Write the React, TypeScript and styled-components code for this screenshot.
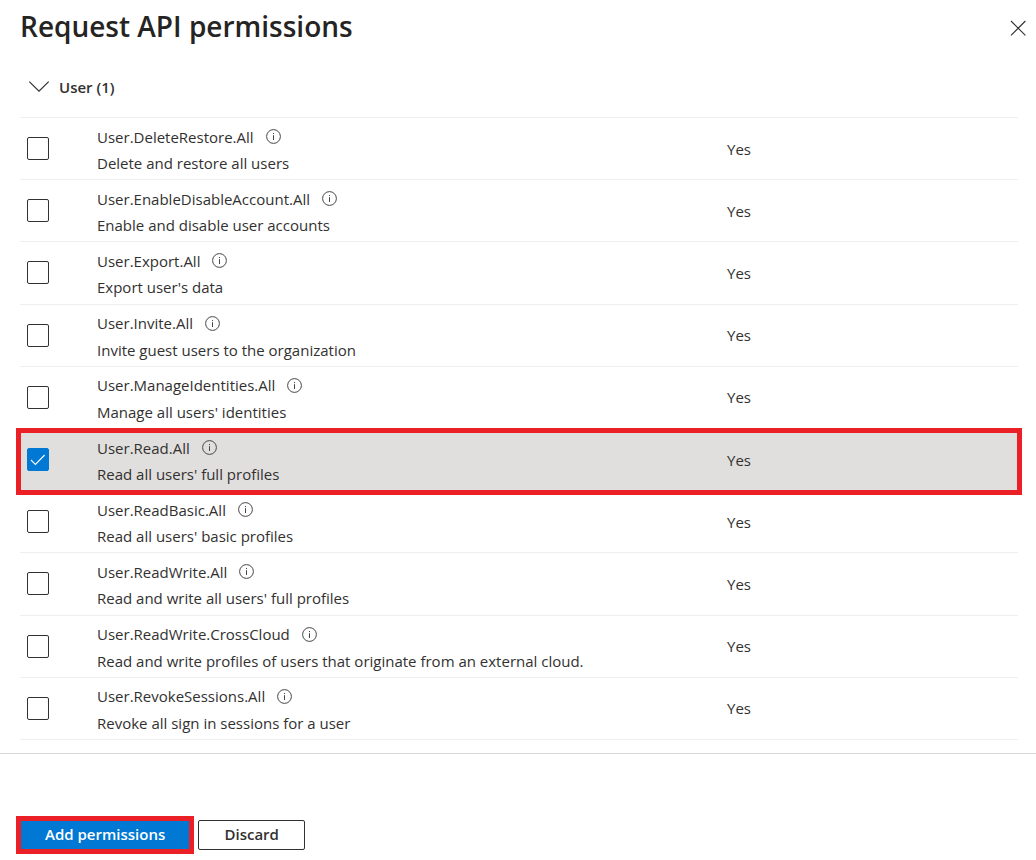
import React, { useState } from "react";
import styled, { createGlobalStyle } from "styled-components";

const GlobalStyle = createGlobalStyle`
  * { box-sizing: border-box; }
  body {
    margin: 0;
    background: #fff;
    color: #323130;
    font-family: "Open Sans", "Noto Sans", sans-serif;
    font-size: 15px;
    line-height: 20px;
  }
  button { font: inherit; color: inherit; cursor: pointer; }
`;

const Panel = styled.main`
  display: flex;
  flex-direction: column;
`;

const Header = styled.header`
  display: flex;
  align-items: center;
  justify-content: space-between;
  height: 56px;
  padding: 0 8px 0 20px;
`;

const Title = styled.h1`
  margin: 0;
  padding-bottom: 4px;
  font-size: 28px;
  line-height: 40px;
  font-weight: 600;
  color: #252423;
`;

const IconButton = styled.button`
  display: flex;
  padding: 2px;
  border: 0;
  background: none;
`;

const Group = styled.section`
  padding: 0 18px 0 20px;
`;

const GroupHeading = styled.h2`
  margin: 0;
  font-size: 15px;
  border-bottom: 1px solid #efeeed;
`;

const GroupToggle = styled.button`
  display: flex;
  align-items: center;
  gap: 9px;
  width: 100%;
  height: 61px;
  padding: 0 8px;
  border: 0;
  background: none;
  font-weight: 600;
  text-align: left;
`;

const Table = styled.table`
  width: 100%;
  height: 622px;
  border-collapse: separate;
  border-spacing: 0;
`;

const Row = styled.tr<{ $selected: boolean }>`
  position: relative;
  height: 62px;
  background: ${(p) => (p.$selected ? "#e0dfdd" : "transparent")};

  &::after {
    content: "";
    display: ${(p) => (p.$selected ? "block" : "none")};
    position: absolute;
    inset: -1px -4px -4px;
    border: 5px solid #eb2026;
    pointer-events: none;
  }
`;

const Cell = styled.td<{ $width?: number }>`
  width: ${(p) => (p.$width ? `${p.$width}px` : "auto")};
  padding: 0;
  border-bottom: 1px solid #efeeed;
  vertical-align: middle;
`;

const CheckCell = styled(Cell)`
  padding-left: 7px;
`;

const NameCell = styled(Cell)`
  padding-top: 3px;
`;

const CheckBox = styled.span`
  display: grid;
  width: 22px;
  height: 23px;

  & > * { grid-area: 1 / 1; }
`;

const CheckInput = styled.input`
  appearance: none;
  width: 22px;
  height: 23px;
  margin: 0;
  border: 1px solid #323130;
  border-radius: 2px;
  background: #fff;

  &:checked {
    border-color: #0078d4;
    background: #0078d4;
  }
`;

const CheckMark = styled.svg`
  place-self: center;
  pointer-events: none;
`;

const NameLine = styled.div`
  display: flex;
  align-items: center;
  gap: 12px;
  height: 27px;
`;

const Description = styled.div`
  line-height: 27px;
`;

const Footer = styled.footer`
  display: flex;
  gap: 8px;
  margin-top: 13px;
  padding: 66px 20px 10px;
  border-top: 1px solid #d6d6d6;
`;

const Button = styled.button<{ $primary?: boolean }>`
  min-width: 107px;
  height: 30px;
  padding: 0 24px 3px;
  border: 1px solid ${(p) => (p.$primary ? "#0078d4" : "#323130")};
  border-radius: 2px;
  background: ${(p) => (p.$primary ? "#0078d4" : "#fff")};
  color: ${(p) => (p.$primary ? "#fff" : "#323130")};
  font-weight: 600;
  line-height: 20px;
`;

const Highlight = styled.div`
  display: flex;
  outline: 5px solid #eb2026;
  outline-offset: -1px;
`;

const InfoIcon = () => (
  <svg width="15" height="15" viewBox="0 0 15 15" fill="none" stroke="#484644" aria-hidden="true">
    <circle cx="7.5" cy="7.5" r="6.9" />
    <path d="M7.5 6.2V11M7.5 4V5.1" />
  </svg>
);

const permissions = [
  ["User.DeleteRestore.All", "Delete and restore all users"],
  ["User.EnableDisableAccount.All", "Enable and disable user accounts"],
  ["User.Export.All", "Export user's data"],
  ["User.Invite.All", "Invite guest users to the organization"],
  ["User.ManageIdentities.All", "Manage all users' identities"],
  ["User.Read.All", "Read all users' full profiles"],
  ["User.ReadBasic.All", "Read all users' basic profiles"],
  ["User.ReadWrite.All", "Read and write all users' full profiles"],
  ["User.ReadWrite.CrossCloud", "Read and write profiles of users that originate from an external cloud."],
  ["User.RevokeSessions.All", "Revoke all sign in sessions for a user"],
];

export default function App() {
  const [selected, setSelected] = useState<string[]>(["User.Read.All"]);
  const toggle = (name: string) =>
    setSelected((s) => (s.includes(name) ? s.filter((n) => n !== name) : [...s, name]));

  return (
    <Panel>
      <GlobalStyle />
      <Header>
        <Title>Request API permissions</Title>
        <IconButton type="button" aria-label="Close">
          <svg width="16" height="16" viewBox="0 0 16 16" fill="none" stroke="#323130" strokeWidth="1.1">
            <path d="M1 1l14.4 14.4M15.4 1L1 15.4" />
          </svg>
        </IconButton>
      </Header>
      <Group>
        <GroupHeading>
          <GroupToggle type="button" aria-expanded="true">
            <svg width="22" height="12" viewBox="0 0 22 12" fill="none" stroke="#323130" strokeWidth="1.2">
              <path d="M1.3 .6L11 10.2 20.7 .6" />
            </svg>
            User (1)
          </GroupToggle>
        </GroupHeading>
        <Table>
          <tbody>
            {permissions.map(([name, description]) => {
              const checked = selected.includes(name);
              return (
                <Row key={name} $selected={checked}>
                  <CheckCell $width={77}>
                    <CheckBox>
                      <CheckInput type="checkbox" id={name} checked={checked} onChange={() => toggle(name)} />
                      {checked && (
                        <CheckMark width="16" height="12" viewBox="0 0 16 12" fill="none" stroke="#fff" strokeWidth="1.1">
                          <path d="M1 6L5.4 10.4 14.6 1" />
                        </CheckMark>
                      )}
                    </CheckBox>
                  </CheckCell>
                  <NameCell>
                    <NameLine>
                      <label htmlFor={name}>{name}</label>
                      <InfoIcon />
                    </NameLine>
                    <Description>{description}</Description>
                  </NameCell>
                  <Cell $width={291}>Yes</Cell>
                </Row>
              );
            })}
          </tbody>
        </Table>
      </Group>
      <Footer>
        <Highlight>
          <Button type="button" $primary>Add permissions</Button>
        </Highlight>
        <Button type="button">Discard</Button>
      </Footer>
    </Panel>
  );
}
